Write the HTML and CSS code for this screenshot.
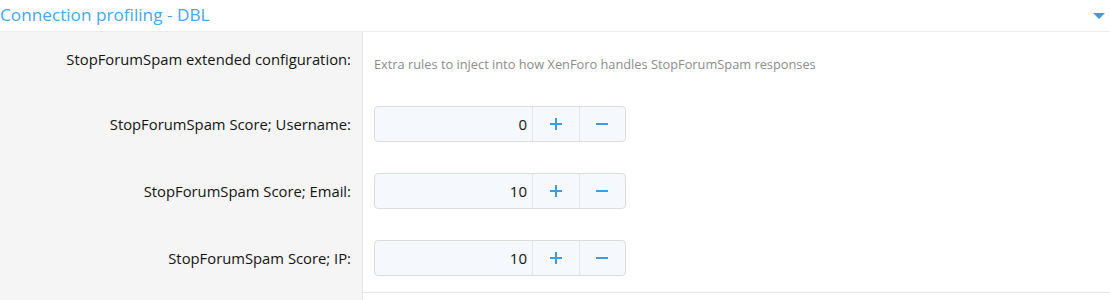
FILE: index.html
```html
<!DOCTYPE html>
<html lang="en">
<head>
    <meta charset="UTF-8">
    <title>Connection profiling - DBL</title>
    <link rel="stylesheet" href="styles.css">
</head>
<body>
    <div class="block">
        <h2 class="block-header">
            <span>Connection profiling - DBL</span>
            <span class="toggle"></span>
        </h2>
        <div class="block-body">
            <dl class="form-row first">
                <dt>StopForumSpam extended configuration:</dt>
                <dd><div class="explain">Extra rules to inject into how XenForo handles StopForumSpam responses</div></dd>
            </dl>
            <dl class="form-row">
                <dt><span>StopForumSpam Score; Username:</span></dt>
                <dd>
                    <div class="spinbox">
                        <input type="text" value="0">
                        <button><svg width="14" height="14" viewBox="0 0 14 14"><path d="M7 1v12M1 7h12" stroke="currentColor" stroke-width="2"/></svg></button>
                        <button><svg width="14" height="14" viewBox="0 0 14 14"><path d="M1 7h12" stroke="currentColor" stroke-width="2"/></svg></button>
                    </div>
                </dd>
            </dl>
            <dl class="form-row">
                <dt><span>StopForumSpam Score; Email:</span></dt>
                <dd>
                    <div class="spinbox">
                        <input type="text" value="10">
                        <button><svg width="14" height="14" viewBox="0 0 14 14"><path d="M7 1v12M1 7h12" stroke="currentColor" stroke-width="2"/></svg></button>
                        <button><svg width="14" height="14" viewBox="0 0 14 14"><path d="M1 7h12" stroke="currentColor" stroke-width="2"/></svg></button>
                    </div>
                </dd>
            </dl>
            <dl class="form-row last">
                <dt><span>StopForumSpam Score; IP:</span></dt>
                <dd>
                    <div class="spinbox">
                        <input type="text" value="10">
                        <button><svg width="14" height="14" viewBox="0 0 14 14"><path d="M7 1v12M1 7h12" stroke="currentColor" stroke-width="2"/></svg></button>
                        <button><svg width="14" height="14" viewBox="0 0 14 14"><path d="M1 7h12" stroke="currentColor" stroke-width="2"/></svg></button>
                    </div>
                </dd>
            </dl>
        </div>
    </div>
</body>
</html>
```

FILE: styles.css
```css
* {
    box-sizing: border-box;
    font-family: "Open Sans", "Noto Sans", sans-serif;
}

body {
    margin: 0;
    background-color: #fff;
    color: #141414;
}

.block-header {
    display: flex;
    justify-content: space-between;
    align-items: center;
    height: 32px;
    margin: 0;
    padding: 0 5px 2px 0;
    font-size: 17.2px;
    font-weight: normal;
    color: #47a7eb;
    border-bottom: 1px solid #ececec;
}

.toggle {
    width: 0;
    height: 0;
    border-left: 6px solid transparent;
    border-right: 6px solid transparent;
    border-top: 6px solid #3d9be3;
    margin-top: 2px;
}

.form-row {
    display: flex;
    align-items: flex-start;
    margin: 0;
}

.form-row dt {
    width: 363px;
    height: 67px;
    flex-shrink: 0;
    display: flex;
    justify-content: flex-end;
    align-items: center;
    background-color: #f5f5f5;
    border-right: 1px solid #e5e5e5;
    padding: 14px 11px 17px 0;
    font-size: 14.8px;
    color: #141414;
    white-space: nowrap;
}

.form-row dd {
    flex: 1;
    height: 67px;
    margin: 0;
    padding: 14px 0 0 11px;
}

.form-row.first dt,
.form-row.first dd {
    height: 60px;
    align-items: flex-start;
}

.form-row.first dt {
    padding-top: 17px;
}

.form-row.first dd {
    padding-top: 23px;
}

.form-row.last dt {
    height: 100px;
    padding-bottom: 50px;
}

.form-row.last dd {
    border-bottom: 1px solid #e2e2e2;
}

.explain {
    font-size: 12.8px;
    color: #8c8c8c;
}

.spinbox {
    display: flex;
    width: 252px;
    height: 36px;
    border: 1px solid #dcdcdc;
    border-radius: 4px;
    background-color: #f5f9fd;
    overflow: hidden;
}

.spinbox input {
    width: 157px;
    border: none;
    background: transparent;
    text-align: right;
    padding: 0 5px 0 0;
    font-size: 15px;
    color: #141414;
}

.spinbox button {
    display: flex;
    justify-content: center;
    align-items: center;
    width: 47px;
    border: none;
    border-left: 1px solid #e3e6ea;
    background: transparent;
    color: #3d9be3;
    padding: 0;
}
```
